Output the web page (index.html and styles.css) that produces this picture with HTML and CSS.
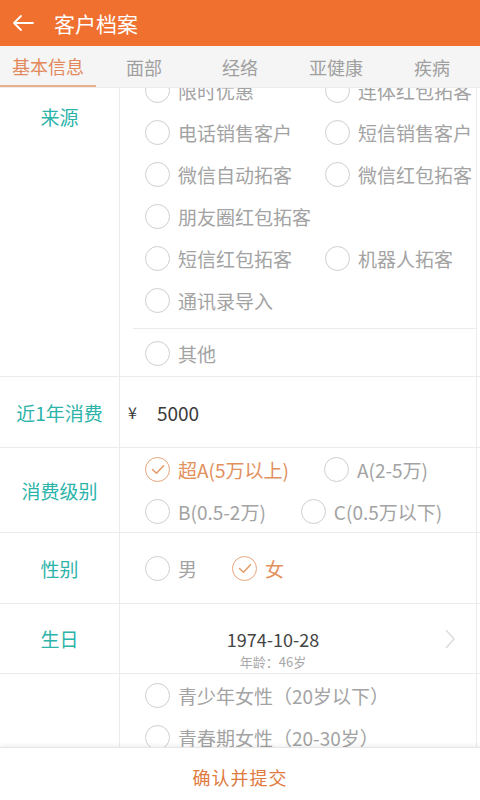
FILE: index.html
```html
<!DOCTYPE html>
<html>
<head>
  <meta charset="utf-8">
  <title>客户档案</title>
  <link rel="stylesheet" href="styles.css">
</head>
<body>
  <div class="app">
    <div class="topbar">
      <svg class="back" width="24" height="20" viewBox="0 0 24 20">
        <path d="M22 10H3M10 3L3 10l7 7" fill="none" stroke="#fff" stroke-width="1.8" stroke-linecap="round" stroke-linejoin="round"/>
      </svg>
      <span class="title">客户档案</span>
    </div>

    <div class="tabs">
      <div class="tab active">基本信息</div>
      <div class="tab">面部</div>
      <div class="tab">经络</div>
      <div class="tab">亚健康</div>
      <div class="tab">疾病</div>
    </div>

    <div class="content">
      <div class="scroller">
        <div class="row row-source">
          <div class="label label-top">来源</div>
          <div class="field">
            <div class="options group">
              <div class="opt"><span class="circle"></span>限时优惠</div>
              <div class="opt"><span class="circle"></span>连体红包拓客</div>
              <div class="opt"><span class="circle"></span>电话销售客户</div>
              <div class="opt"><span class="circle"></span>短信销售客户</div>
              <div class="opt"><span class="circle"></span>微信自动拓客</div>
              <div class="opt"><span class="circle"></span>微信红包拓客</div>
              <div class="opt"><span class="circle"></span>朋友圈红包拓客</div>
              <div class="opt"></div>
              <div class="opt"><span class="circle"></span>短信红包拓客</div>
              <div class="opt"><span class="circle"></span>机器人拓客</div>
              <div class="opt"><span class="circle"></span>通讯录导入</div>
            </div>
            <div class="options other">
              <div class="opt"><span class="circle"></span>其他</div>
            </div>
          </div>
        </div>

        <div class="row row-money">
          <div class="label">近1年消费</div>
          <div class="field money">
            <span class="yen">¥</span>
            <span class="amount">5000</span>
          </div>
        </div>

        <div class="row">
          <div class="label">消费级别</div>
          <div class="field">
            <div class="options flow">
              <div class="opt checked"><span class="circle"><svg width="24" height="24" viewBox="0 0 24 24"><path d="M6.5 12.5l4 3.8 7-7.6" fill="none" stroke="#e49a68" stroke-width="1.5" stroke-linecap="round" stroke-linejoin="round"/></svg></span>超A(5万以上)</div>
              <div class="opt"><span class="circle"></span>A(2-5万)</div>
              <div class="opt"><span class="circle"></span>B(0.5-2万)</div>
              <div class="opt"><span class="circle"></span>C(0.5万以下)</div>
            </div>
          </div>
        </div>

        <div class="row row-gender">
          <div class="label">性别</div>
          <div class="field center">
            <div class="options flow">
              <div class="opt"><span class="circle"></span>男</div>
              <div class="opt checked"><span class="circle"><svg width="24" height="24" viewBox="0 0 24 24"><path d="M6.5 12.5l4 3.8 7-7.6" fill="none" stroke="#e49a68" stroke-width="1.5" stroke-linecap="round" stroke-linejoin="round"/></svg></span>女</div>
            </div>
          </div>
        </div>

        <div class="row row-birth">
          <div class="label">生日</div>
          <div class="field birth">
            <div class="date">1974-10-28</div>
            <div class="age">年龄：46岁</div>
            <svg class="chevron" width="12" height="22" viewBox="0 0 12 22">
              <path d="M2 2l8 9-8 9" fill="none" stroke="#dcdcdc" stroke-width="1.5" stroke-linejoin="round"/>
            </svg>
          </div>
        </div>

        <div class="row">
          <div class="label"></div>
          <div class="field">
            <div class="options single">
              <div class="opt"><span class="circle"></span>青少年女性（20岁以下）</div>
              <div class="opt"><span class="circle"></span>青春期女性（20-30岁）</div>
              <div class="opt"><span class="circle"></span>成熟期女性（30-40岁）</div>
            </div>
          </div>
        </div>
      </div>
    </div>

    <div class="footer">确认并提交</div>
  </div>
</body>
</html>
```

FILE: styles.css
```css
* {
  box-sizing: border-box;
}

body {
  margin: 0;
  font-family: "Noto Sans CJK SC", "Noto Sans", sans-serif;
  background-color: #fff;
}

.app {
  width: 480px;
  height: 800px;
  display: flex;
  flex-direction: column;
  overflow: hidden;
}

.topbar {
  height: 46px;
  flex-shrink: 0;
  background-color: #f0702f;
  display: flex;
  align-items: center;
  padding-left: 11px;
}

.topbar .back {
  margin-right: 19px;
}

.topbar .title {
  color: #fff;
  font-size: 21px;
}

.tabs {
  height: 42px;
  flex-shrink: 0;
  display: flex;
  background-color: #f5f5f5;
  border-bottom: 1px solid #ececec;
}

.tab {
  flex: 1;
  display: flex;
  align-items: center;
  justify-content: center;
  font-size: 18px;
  color: #a0a0a0;
}

.tab.active {
  color: #e2885a;
  border-bottom: 2px solid #eab08e;
}

.content {
  flex: 1;
  overflow: hidden;
}

.scroller {
  margin-top: -19px;
}

.row {
  display: flex;
  border-bottom: 1px solid #ebebeb;
}

.label {
  width: 120px;
  flex-shrink: 0;
  border-right: 1px solid #ebebeb;
  display: flex;
  align-items: center;
  justify-content: center;
  font-size: 19px;
  color: #2cb3aa;
}

.label-top {
  align-items: flex-start;
  padding-top: 34px;
}

.field {
  flex: 1;
  min-width: 0;
  border-right: 1px solid #ebebeb;
  margin-right: 3px;
}

.options {
  display: flex;
  flex-wrap: wrap;
  padding-left: 25px;
}

.group {
  display: grid;
  grid-template-columns: 180px 1fr;
  padding-bottom: 7px;
  border-bottom: 1px solid #ebebeb;
  margin-left: 13px;
  padding-left: 12px;
}

.other {
  padding-top: 3px;
  padding-bottom: 2px;
}

.flow {
  column-gap: 35px;
}

.single {
  flex-direction: column;
}

.opt {
  height: 42px;
  display: flex;
  align-items: center;
  font-size: 19px;
  color: #a3a3a3;
  white-space: nowrap;
}

.circle {
  width: 25px;
  height: 25px;
  border: 1.5px solid #cfcfcf;
  border-radius: 50%;
  margin-right: 8px;
  flex-shrink: 0;
  display: flex;
  align-items: center;
  justify-content: center;
}

.circle svg {
  flex-shrink: 0;
}

.opt.checked {
  color: #e2905e;
}

.opt.checked .circle {
  border-color: #e8a57a;
}

.row-money {
  height: 71px;
}

.money {
  display: flex;
  align-items: center;
  padding-left: 8px;
  font-size: 19px;
  color: #3a3a3a;
}

.money .yen {
  font-size: 16px;
  margin-right: 20px;
}

.row-gender {
  height: 71px;
}

.center {
  display: flex;
  align-items: center;
}

.row-birth {
  height: 70px;
}

.birth {
  position: relative;
  display: flex;
  flex-direction: column;
  align-items: center;
  padding-top: 21px;
  padding-right: 50px;
}

.birth .date {
  font-size: 18px;
  color: #444;
  line-height: 28px;
}

.birth .age {
  font-size: 13px;
  color: #a8a8a8;
  line-height: 16px;
  margin-top: 1px;
}

.birth .chevron {
  position: absolute;
  right: 20px;
  top: 24px;
}

.footer {
  height: 53px;
  flex-shrink: 0;
  background-color: #fff;
  border-top: 1px solid #e6e6e6;
  box-shadow: 0 -2px 4px rgba(0, 0, 0, 0.06);
  display: flex;
  align-items: center;
  justify-content: center;
  padding-top: 6px;
  font-size: 18px;
  color: #e07a3e;
  letter-spacing: 1px;
  position: relative;
}
```
